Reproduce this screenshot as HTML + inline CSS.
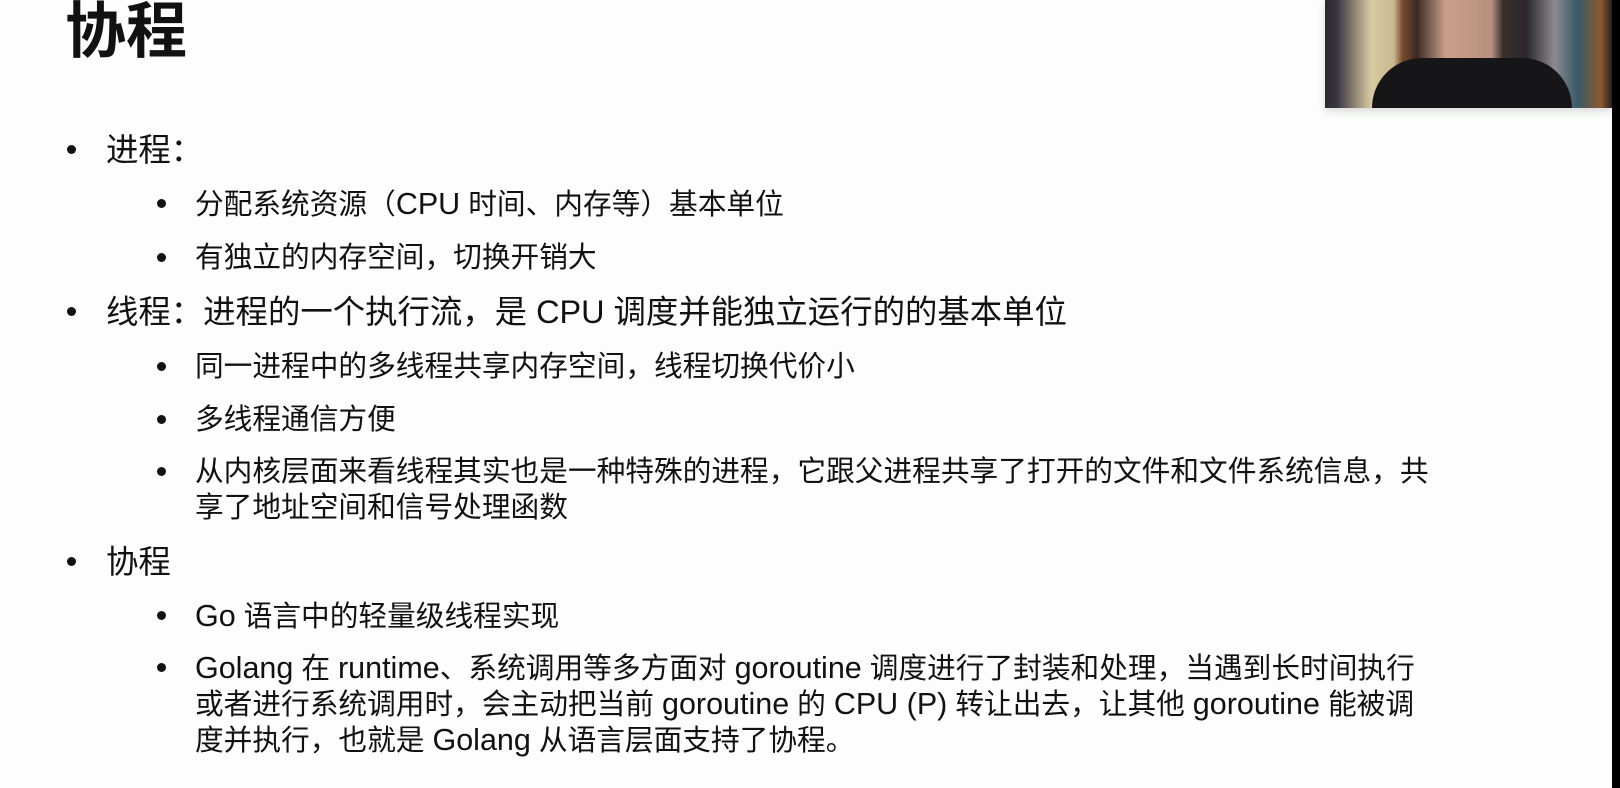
<!DOCTYPE html>
<html><head><meta charset="utf-8"><style>
body{margin:0;width:1620px;height:788px;background:#fcfdfc;position:relative;overflow:hidden;font-family:"Liberation Sans","Noto Sans CJK SC",sans-serif;color:#111}
.t{position:absolute;left:65px;top:-4px;font-size:61px;font-weight:bold;line-height:70px}
.l{position:absolute;white-space:nowrap;line-height:40px}
.a{left:106px;font-size:32.4px}
.b{left:195px;font-size:28.7px}
.e{font-size:30.5px}
.d{position:absolute;width:9px;height:9px;border-radius:50%;background:#111}
.cam{position:absolute;left:1325px;top:0;width:287px;height:108px;background:linear-gradient(90deg,#2a2830 0,#3a3442 4%,#d8c8a0 16%,#c9b890 24%,#7a4a2c 27%,#3a2a24 32%,#c8a08a 42%,#b89080 58%,#3a2e2c 62%,#2a262a 70%,#8a8a90 80%,#3a5a6a 88%,#8a5a30 96%,#2a2020 100%);box-shadow:0 3px 8px rgba(0,0,0,.15)}
.body{position:absolute;left:1372px;top:58px;width:200px;height:50px;background:#161618;border-radius:60px 60px 0 0}
.strip{position:absolute;left:1612px;top:0;width:8px;height:788px;background:#000}
</style></head><body>
<div class="t">协程</div>
<div class="cam"></div><div class="body"></div><div class="strip"></div>

<div class="d" style="left:67px;top:145px"></div><div class="l a" style="top:130px">进程：</div>
<div class="d" style="left:157px;top:199px"></div><div class="l b" style="top:184px">分配系统资源（<span class="e">CPU</span> 时间、内存等）基本单位</div>
<div class="d" style="left:157px;top:253px"></div><div class="l b" style="top:238px">有独立的内存空间，切换开销大</div>
<div class="d" style="left:67px;top:307px"></div><div class="l a" style="top:292px">线程：进程的一个执行流，是 CPU 调度并能独立运行的的基本单位</div>
<div class="d" style="left:157px;top:362px"></div><div class="l b" style="top:347px">同一进程中的多线程共享内存空间，线程切换代价小</div>
<div class="d" style="left:157px;top:415px"></div><div class="l b" style="top:400px">多线程通信方便</div>
<div class="d" style="left:157px;top:467px"></div><div class="l b" style="top:452px">从内核层面来看线程其实也是一种特殊的进程，它跟父进程共享了打开的文件和文件系统信息，共</div>
<div class="l b" style="top:488px">享了地址空间和信号处理函数</div>
<div class="d" style="left:67px;top:557px"></div><div class="l a" style="top:542px">协程</div>
<div class="d" style="left:157px;top:611px"></div><div class="l b" style="top:596px"><span class="e">Go</span> 语言中的轻量级线程实现</div>
<div class="d" style="left:157px;top:663px"></div><div class="l b" style="top:648px"><span class="e">Golang</span> 在 <span class="e">runtime</span>、系统调用等多方面对 <span class="e">goroutine</span> 调度进行了封装和处理，当遇到长时间执行</div>
<div class="l b" style="top:684px">或者进行系统调用时，会主动把当前 <span class="e">goroutine</span> 的 <span class="e">CPU (P)</span> 转让出去，让其他 <span class="e">goroutine</span> 能被调</div>
<div class="l b" style="top:720px">度并执行，也就是 <span class="e">Golang</span> 从语言层面支持了协程。</div>
</body></html>
